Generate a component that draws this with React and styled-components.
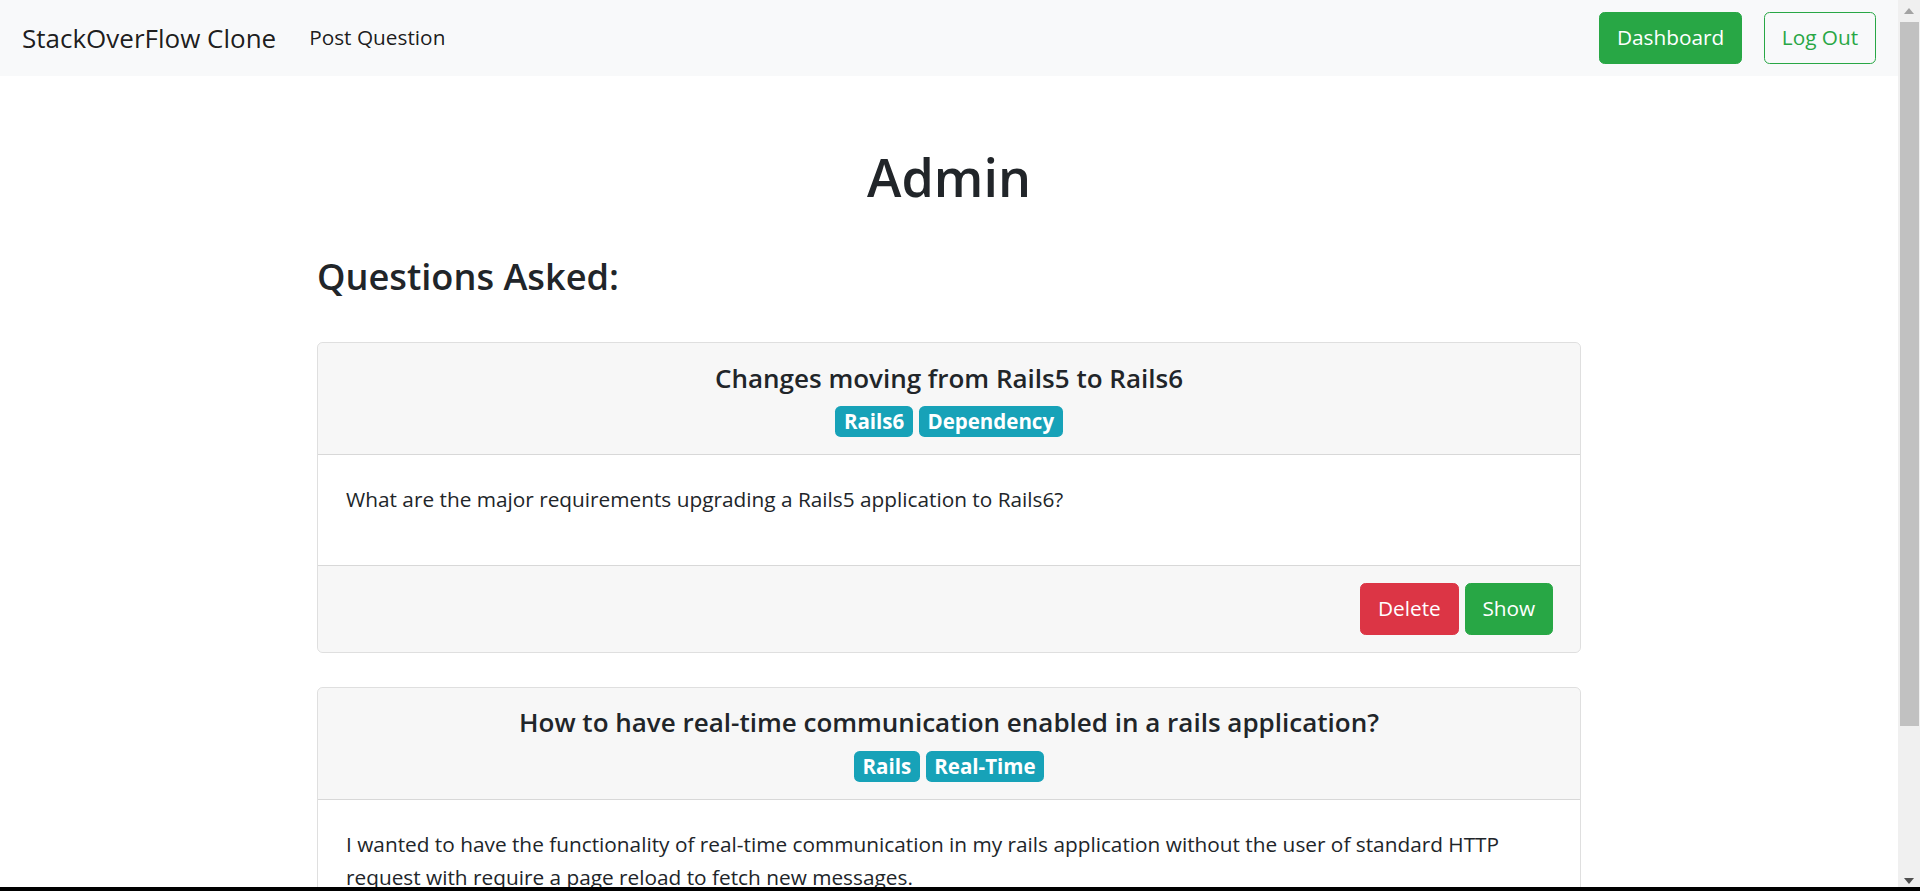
import React from "react";
import styled, { createGlobalStyle } from "styled-components";

const GlobalStyle = createGlobalStyle`
  body {
    margin: 0;
    padding-right: 22px;
    font-family: "Open Sans", "Noto Sans", sans-serif;
    font-size: 20.8px;
    line-height: 33.6px;
    color: #212529;
    background: #fff;
  }
`;

const questions = [
  {
    id: 1,
    title: "Changes moving from Rails5 to Rails6",
    tags: ["Rails6", "Dependency"],
    body: "What are the major requirements upgrading a Rails5 application to Rails6?",
  },
  {
    id: 2,
    title: "How to have real-time communication enabled in a rails application?",
    tags: ["Rails", "Real-Time"],
    body: "I wanted to have the functionality of real-time communication in my rails application without the user of standard HTTP request with require a page reload to fetch new messages.",
  },
];

const Navbar = styled.nav`
  display: flex;
  align-items: center;
  justify-content: space-between;
  height: 76px;
  padding: 0 22px;
  background: #f8f9fa;
`;

const NavLeft = styled.div`
  display: flex;
  align-items: center;
`;

const Brand = styled.a`
  font-size: 26px;
  line-height: 38px;
  color: rgba(0, 0, 0, 0.9);
  margin-right: 33px;
  text-decoration: none;
`;

const NavLink = styled.a`
  font-size: 20.8px;
  color: rgba(0, 0, 0, 0.9);
  text-decoration: none;
`;

const NavRight = styled.div`
  display: flex;
  align-items: center;
  gap: 22px;
`;

const Button = styled.button`
  font-family: inherit;
  font-size: 20.8px;
  line-height: 33.6px;
  padding: 8.4px 16.8px;
  border-radius: 5.6px;
  border: 1px solid ${(p) => p.$color};
  background: ${(p) => (p.$outline ? "transparent" : p.$color)};
  color: ${(p) => (p.$outline ? p.$color : "#fff")};
  cursor: pointer;
`;

const Main = styled.main`
  width: 1264px;
  margin: 0 auto;
  padding-bottom: 10px;
`;

const PageTitle = styled.h1`
  margin: 67px 0 0;
  font-size: 52px;
  line-height: 67px;
  font-weight: 600;
  text-align: center;
`;

const SectionTitle = styled.h3`
  margin: 43px 0 42px;
  font-size: 36.2px;
  line-height: 47px;
  font-weight: 600;
`;

const Card = styled.div`
  border: 1px solid rgba(0, 0, 0, 0.125);
  border-radius: 5.6px;
  margin-bottom: 34px;
  overflow: hidden;
`;

const CardHeader = styled.div`
  background: rgba(0, 0, 0, 0.03);
  padding: 18.5px 28px 16.5px;
  border-bottom: 1px solid rgba(0, 0, 0, 0.125);
  text-align: center;
`;

const CardTitle = styled.h5`
  margin: 0 0 11px;
  font-size: 26px;
  line-height: 33.6px;
  font-weight: 600;
`;

const Tags = styled.div`
  display: flex;
  justify-content: center;
  gap: 6px;
`;

const Badge = styled.span`
  display: inline-block;
  padding: 5.2px 8.6px;
  font-size: 20.5px;
  line-height: 21px;
  font-weight: 700;
  color: #fff;
  background: #17a2b8;
  border-radius: 5.6px;
`;

const CardBody = styled.div`
  padding: 28px 28px 26px;
`;

const BodyText = styled.p`
  margin: 0 0 22.4px;
`;

const CardFooter = styled.div`
  display: flex;
  justify-content: flex-end;
  gap: 6px;
  padding: 16.8px 27px;
  background: rgba(0, 0, 0, 0.03);
  border-top: 1px solid rgba(0, 0, 0, 0.125);
`;

/* window chrome: classic scrollbar and the bottom edge of the capture */
const ScrollTrack = styled.div`
  position: fixed;
  top: 0;
  right: 0;
  bottom: 0;
  width: 22px;
  background: #f0f0f0;
  display: flex;
  flex-direction: column;
  align-items: center;
`;

const ScrollArrow = styled.div`
  height: 21px;
  display: flex;
  align-items: center;
  justify-content: center;
`;

const ScrollThumb = styled.div`
  width: 19px;
  height: 704px;
  margin: 1px 0 0 1px;
  background: #c1c1c1;
`;

const ScrollSpacer = styled.div`
  flex: 1;
`;

const BottomEdge = styled.div`
  position: fixed;
  left: 0;
  right: 0;
  bottom: 0;
  height: 4px;
  background: #000;
`;

const Arrow = ({ up }) => (
  <svg width="10" height="6" viewBox="0 0 10 6">
    <polygon
      points={up ? "0,6 5,0 10,6" : "0,0 10,0 5,6"}
      fill={up ? "#a3a3a3" : "#505050"}
    />
  </svg>
);

const QuestionCard = ({ question }) => (
  <Card>
    <CardHeader>
      <CardTitle>{question.title}</CardTitle>
      <Tags>
        {question.tags.map((tag) => (
          <Badge key={tag}>{tag}</Badge>
        ))}
      </Tags>
    </CardHeader>
    <CardBody>
      <BodyText>{question.body}</BodyText>
    </CardBody>
    <CardFooter>
      <Button $color="#dc3545">Delete</Button>
      <Button $color="#28a745">Show</Button>
    </CardFooter>
  </Card>
);

const App = () => {
  return (
    <React.Fragment>
      <GlobalStyle />
      <Navbar>
        <NavLeft>
          <Brand href="#">StackOverFlow Clone</Brand>
          <NavLink href="#">Post Question</NavLink>
        </NavLeft>
        <NavRight>
          <Button $color="#28a745">Dashboard</Button>
          <Button $color="#28a745" $outline>
            Log Out
          </Button>
        </NavRight>
      </Navbar>
      <Main>
        <PageTitle>Admin</PageTitle>
        <SectionTitle>Questions Asked:</SectionTitle>
        {questions.map((q) => (
          <QuestionCard key={q.id} question={q} />
        ))}
      </Main>
      <ScrollTrack>
        <ScrollArrow>
          <Arrow up />
        </ScrollArrow>
        <ScrollThumb />
        <ScrollSpacer />
        <ScrollArrow>
          <Arrow />
        </ScrollArrow>
      </ScrollTrack>
      <BottomEdge />
    </React.Fragment>
  );
};

export default App;
